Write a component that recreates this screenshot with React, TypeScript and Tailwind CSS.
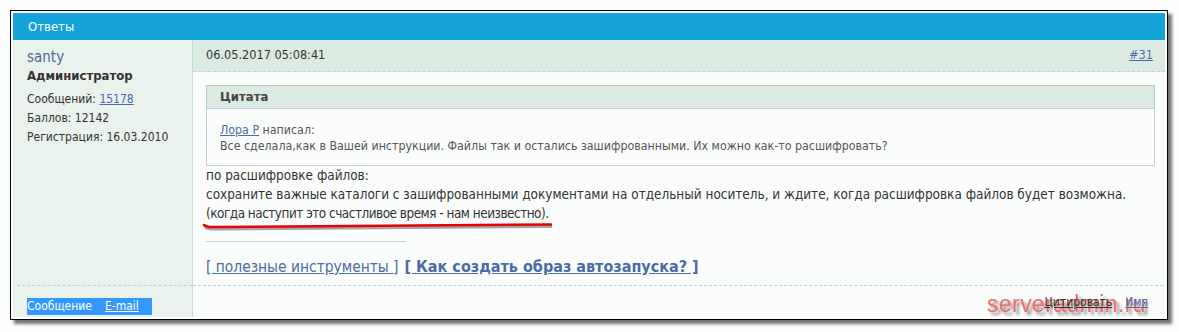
import React from "react";

const font = { fontFamily: '"DejaVu Sans Condensed", "DejaVu Sans", Tahoma, sans-serif' };

export default function App() {
  return (
    <div className="w-[1179px] h-[332px] bg-[#fcfefe] pt-[10px] pl-[10px]" style={font}>
      {/* framed screenshot */}
      <div className="relative w-[1158px] h-[310px] border border-black bg-white p-[2px] shadow-[4px_4px_3px_rgba(0,0,0,0.55)]">
        <div className="flex flex-col h-full w-[1152px]">
          <div className="h-[28px] bg-[#13a3d9] flex items-center pl-[15px] text-white text-[13px]">Ответы</div>

          <div className="flex flex-1">
            {/* left column */}
            <div className="w-[180px] bg-[#e9f2ec] border-r border-[#c6dccd] flex flex-col">
              <div className="h-[245px] pl-[14px] pt-[8px] text-[12px] text-[#333]">
                <div className="text-[15px] text-[#4c6a93] leading-[19px]">santy</div>
                <div className="font-bold text-[13px] leading-[18px] text-[#333]">Администратор</div>
                <div className="mt-[5px] leading-[19px]">
                  Сообщений: <span className="underline text-[#4a6ba8]">15178</span>
                </div>
                <div className="leading-[19px]">Баллов: 12142</div>
                <div className="leading-[19px]">Регистрация: 16.03.2010</div>
              </div>
              <div className="flex-1 border-t border-dashed border-[#b8d8cd] ml-[4px] pt-[7px] pl-[10px]">
                <span className="bg-[#3399ff] text-white text-[12px] leading-[17px] inline-block pr-[13px]">
                  Сообщение<span className="inline-block w-[13px]"></span>
                  <span className="underline">E-mail</span>
                </span>
              </div>
            </div>

            {/* right column */}
            <div className="flex-1 flex flex-col bg-[#fbfdfc]">
              <div className="h-[245px] flex flex-col">
                <div className="h-[32px] bg-[#dcebe1] border-b border-dashed border-[#c3d3ca] flex items-center justify-between pl-[13px] pr-[12px] text-[12.6px] text-[#333]">
                  <span>06.05.2017 05:08:41</span>
                  <span className="underline text-[#4a6ba8]">#31</span>
                </div>
                <div className="pl-[13px] pr-[10px] pt-[13px]">
                  <div className="border border-[#b6cfc1]">
                    <div className="h-[23px] bg-[#dcebe1] border-b border-[#c5c9d9] flex items-center pl-[13px] font-bold text-[13px] text-[#444]">Цитата</div>
                    <div className="bg-[#fbfdfc] border-x border-b border-[#c5c9d9] -mx-px -mb-px pl-[13px] pt-[13px] pb-[11px] text-[12.3px] text-[#555] leading-[16px]">
                      <div>
                        <span className="underline text-[#4a6ba8]">Лора Р</span> написал:
                      </div>
                      <div>Все сделала,как в Вашей инструкции. Файлы так и остались зашифрованными. Их можно как-то расшифровать?</div>
                    </div>
                  </div>
                  <div className="text-[13.45px] text-[#333] leading-[19px]">
                    <div>по расшифровке файлов:</div>
                    <div>сохраните важные каталоги с зашифрованными документами на отдельный носитель, и ждите, когда расшифровка файлов будет возможна.</div>
                    <div className="tracking-[-0.5px]">(когда наступит это счастливое время - нам неизвестно).</div>
                  </div>
                  <div className="mt-[18px] w-[200px] h-px bg-[#b9dccb]"></div>
                  <div className="mt-[13px] flex items-baseline gap-[6px] text-[#4a6ba8]">
                    <span className="underline text-[15.4px]">[ полезные инструменты ]</span>
                    <span className="underline font-bold text-[16px]">[ Как создать образ автозапуска? ]</span>
                  </div>
                </div>
              </div>
              <div className="flex-1 border-t border-dashed border-[#b8d8cd] mr-[2px] flex justify-end items-start pt-[7px] pr-[15px] text-[12px]">
                <span className="relative z-10 underline text-[#333]">Цитировать</span>
                <span className="relative z-10 underline text-[#4a6ba8] ml-[13px]">Имя</span>
              </div>
            </div>
          </div>
        </div>

        {/* red annotation stroke */}
        <svg className="absolute left-[190px] top-[208px]" width="360" height="12" viewBox="0 0 360 12">
          <path d="M3 6 Q 6 8.5 14 8 L 350 5.5" stroke="rgba(0,0,0,0.35)" strokeWidth="3" fill="none" transform="translate(1,2)" />
          <path d="M3 6 Q 6 8.5 14 8 L 350 5.5" stroke="#e8000b" strokeWidth="2.5" fill="none" strokeLinecap="round" />
        </svg>

        {/* watermark */}
        <div
          className="absolute z-0 left-[976px] top-[280px] text-[23px] leading-[26px] text-[#f26b6b] tracking-[0.4px]"
          style={{ fontFamily: '"Liberation Sans", Arial, sans-serif', textShadow: "3px 3px 3px rgba(0,0,0,0.45)" }}
        >
          serveradmin.ru
        </div>
      </div>
    </div>
  );
}
